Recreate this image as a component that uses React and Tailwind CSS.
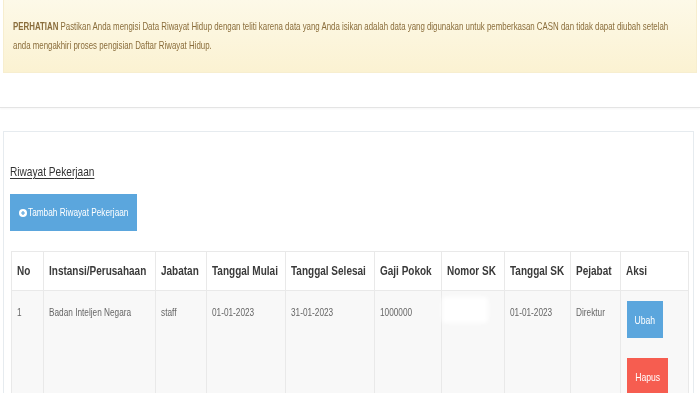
import React from "react";

function T({ children, className = "" }) {
  return (
    <span className={"inline-block origin-left scale-x-[0.8] whitespace-nowrap " + className}>
      {children}
    </span>
  );
}

function TN({ children, className = "" }) {
  return (
    <span className={"inline-block origin-left scale-x-[0.75] whitespace-nowrap " + className}>
      {children}
    </span>
  );
}

function TC({ children, className = "" }) {
  return (
    <span className={"inline-block origin-center scale-x-[0.75] whitespace-nowrap " + className}>
      {children}
    </span>
  );
}

const headers = [
  "No",
  "Instansi/Perusahaan",
  "Jabatan",
  "Tanggal Mulai",
  "Tanggal Selesai",
  "Gaji Pokok",
  "Nomor SK",
  "Tanggal SK",
  "Pejabat",
  "Aksi",
];

export default function App() {
  return (
    <div className="w-[700px] h-[393px] overflow-hidden bg-white font-['Liberation_Sans',Arial,sans-serif]">
      {/* Alert */}
      <div className="mx-[3px] h-[73px] border border-t-0 border-[#f7eecf] bg-gradient-to-b from-[#fdf9e8] to-[#fbf2d2] pl-[9px] pt-[17px] text-[10.5px] leading-[19px] text-[#8a6d3b] overflow-hidden">
        <div>
          <TN>
            <b>PERHATIAN</b> Pastikan Anda mengisi Data Riwayat Hidup dengan teliti karena data yang Anda isikan adalah data yang digunakan untuk pemberkasan CASN dan tidak dapat diubah setelah
          </TN>
        </div>
        <div>
          <TN>anda mengakhiri proses pengisian Daftar Riwayat Hidup.</TN>
        </div>
      </div>

      {/* separator */}
      <div className="h-[35px] border-b border-[#e4e4e4] shadow-[0_1px_2px_rgba(0,0,0,0.04)]" />

      {/* Panel */}
      <div className="ml-[3px] mr-[6px] mt-[23px] h-[300px] border border-[#e6ebef] border-b-0 bg-white">
        <div className="pl-[6px] pt-[32px] text-[13.5px] leading-[16px] text-[#333]">
          <TN className="underline underline-offset-2">Riwayat Pekerjaan</TN>
        </div>
        <div className="pl-[6px] mt-[14px]">
          <div className="flex h-[37px] w-[127px] items-center bg-[#5ba6dd] pl-[9px] text-white">
            <svg width="8" height="8" viewBox="0 0 16 16" className="mr-[1px] shrink-0">
              <circle cx="8" cy="8" r="8" fill="white" />
              <path d="M8 4v8M4 8h8" stroke="#5ba6dd" strokeWidth="2.4" />
            </svg>
            <TN className="text-[11px]">Tambah Riwayat Pekerjaan</TN>
          </div>
        </div>

        <table className="ml-[7px] mt-[20px] w-[677px] table-fixed border-collapse text-left">
          <colgroup>
            <col className="w-[32px]" />
            <col className="w-[112px]" />
            <col className="w-[51px]" />
            <col className="w-[79px]" />
            <col className="w-[89px]" />
            <col className="w-[67px]" />
            <col className="w-[63px]" />
            <col className="w-[66px]" />
            <col className="w-[50px]" />
            <col className="w-[68px]" />
          </colgroup>
          <thead>
            <tr className="h-[39px] bg-white">
              {headers.map((h) => (
                <th
                  key={h}
                  className="border border-[#e9e9e9] pl-[5px] text-[12.5px] font-bold leading-[16px] text-[#3a3a3a] overflow-visible"
                >
                  <T>{h}</T>
                </th>
              ))}
            </tr>
          </thead>
          <tbody>
            <tr className="h-[120px] bg-[#f8f8f8] align-top text-[11px] leading-[16px] text-[#666]">
              <td className="border border-[#e9e9e9] pl-[5px] pt-[13px]"><TN>1</TN></td>
              <td className="border border-[#e9e9e9] pl-[5px] pt-[13px]"><TN>Badan Inteljen Negara</TN></td>
              <td className="border border-[#e9e9e9] pl-[5px] pt-[13px]"><TN>staff</TN></td>
              <td className="border border-[#e9e9e9] pl-[5px] pt-[13px]"><TN>01-01-2023</TN></td>
              <td className="border border-[#e9e9e9] pl-[5px] pt-[13px]"><TN>31-01-2023</TN></td>
              <td className="border border-[#e9e9e9] pl-[5px] pt-[13px]"><TN>1000000</TN></td>
              <td className="border border-[#e9e9e9] pl-0 pt-[6px]">
                <div className="h-[26px] w-[46px] rounded-[4px] bg-white blur-[2px]" />
              </td>
              <td className="border border-[#e9e9e9] pl-[5px] pt-[13px]"><TN>01-01-2023</TN></td>
              <td className="border border-[#e9e9e9] pl-[5px] pt-[13px]"><TN>Direktur</TN></td>
              <td className="border border-[#e9e9e9] pl-[6px] pt-[10px]">
                <div className="flex h-[37px] w-[36px] items-center justify-center bg-[#5ba6dd] text-[11.5px] text-white">
                  <TC>Ubah</TC>
                </div>
                <div className="mt-[20px] flex h-[37px] w-[41px] items-center justify-center bg-[#f65d50] text-[11.5px] text-white">
                  <TC>Hapus</TC>
                </div>
              </td>
            </tr>
          </tbody>
        </table>
      </div>
    </div>
  );
}
